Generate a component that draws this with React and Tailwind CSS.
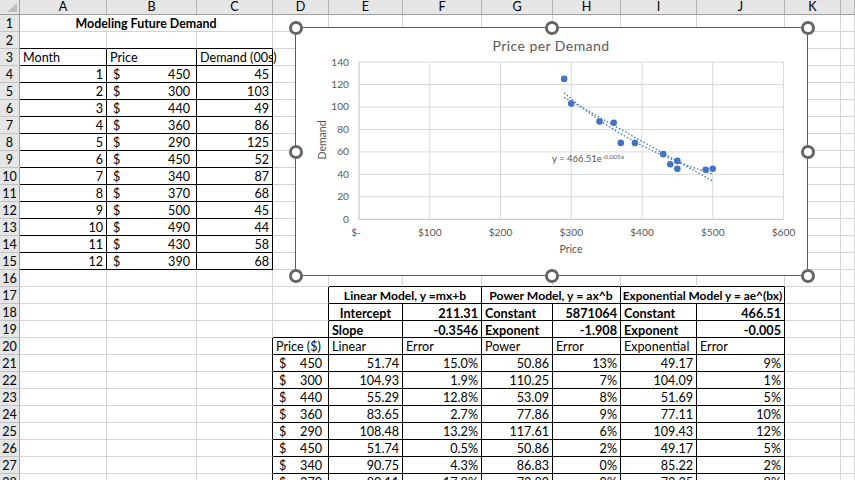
const COLS = ["A", "B", "C", "D", "E", "F", "G", "H", "I", "J", "K", ""];
const DEMAND = [45, 103, 49, 86, 125, 52, 87, 68, 45, 44, 58, 68];
const PRICE = [450, 300, 440, 360, 290, 450, 340, 370, 500, 490, 430, 390];

const MODEL_ROWS = [
  [450, "51.74", "15.0%", "50.86", "13%", "49.17", "9%"],
  [300, "104.93", "1.9%", "110.25", "7%", "104.09", "1%"],
  [440, "55.29", "12.8%", "53.09", "8%", "51.69", "5%"],
  [360, "83.65", "2.7%", "77.86", "9%", "77.11", "10%"],
  [290, "108.48", "13.2%", "117.61", "6%", "109.43", "12%"],
  [450, "51.74", "0.5%", "50.86", "2%", "49.17", "5%"],
  [340, "90.75", "4.3%", "86.83", "0%", "85.22", "2%"],
  [370, "80.11", "17.8%", "73.89", "9%", "73.35", "8%"],
];

// which grid lines are black, r is the sheet row, c the column index
function blackRight(r, c) {
  if (r >= 3 && r <= 15 && c <= 2) return true;
  if (r >= 17 && r <= 19 && c >= 3 && c <= 9) return true;
  if (r >= 20 && c >= 2 && c <= 9) return true;
  return false;
}

function blackBottom(r, c) {
  if (r >= 2 && r <= 15 && c <= 2) return true;
  if (r >= 16 && c >= 4 && c <= 9) return true;
  if (r >= 19 && c === 3) return true;
  return false;
}

function buildCells() {
  const cells = {};
  const put = (r, c, node) => (cells[`${r}-${c}`] = node);

  put(3, 0, <Left>Month</Left>);
  put(3, 1, <Left>Price</Left>);
  put(3, 2, <Left>Demand (00s)</Left>);
  PRICE.forEach((p, i) => {
    put(4 + i, 0, <Right>{i + 1}</Right>);
    put(4 + i, 1, <Money value={p} />);
    put(4 + i, 2, <Right>{DEMAND[i]}</Right>);
  });

  put(18, 4, <div className="text-center font-bold text-[12.7px]">Intercept</div>);
  put(18, 5, <Right bold>211.31</Right>);
  put(18, 6, <Left bold>Constant</Left>);
  put(18, 7, <Right bold>5871064</Right>);
  put(18, 8, <Left bold>Constant</Left>);
  put(18, 9, <Right bold>466.51</Right>);
  put(19, 4, <Left bold>Slope</Left>);
  put(19, 5, <Right bold>-0.3546</Right>);
  put(19, 6, <Left bold>Exponent</Left>);
  put(19, 7, <Right bold>-1.908</Right>);
  put(19, 8, <Left bold>Exponent</Left>);
  put(19, 9, <Right bold>-0.005</Right>);

  ["Price ($)", "Linear", "Error", "Power", "Error", "Exponential", "Error"].forEach((t, i) => {
    put(20, 3 + i, <Left>{t}</Left>);
  });
  MODEL_ROWS.forEach((row, i) => {
    put(21 + i, 3, <Money value={row[0]} />);
    row.slice(1).forEach((t, j) => put(21 + i, 4 + j, <Right>{t}</Right>));
  });
  return cells;
}

function Left({ children, bold }) {
  return <div className={`pl-[3px] whitespace-nowrap ${bold ? "font-bold text-[12.7px]" : ""}`}>{children}</div>;
}

function Right({ children, bold }) {
  return <div className={`pr-[3px] text-right whitespace-nowrap ${bold ? "font-bold text-[12.7px]" : ""}`}>{children}</div>;
}

function Money({ value }) {
  return (
    <div className="flex justify-between px-[6px]">
      <span>$</span>
      <span>{value}</span>
    </div>
  );
}

function Cell({ r, c, span, children }) {
  const right = blackRight(r, c + (span || 1) - 1);
  const bottom = blackBottom(r, c);
  return (
    <div
      className={`h-[17px] border-r border-b leading-[18px] ${right ? "border-r-black" : "border-r-[#d4d4d4]"} ${
        bottom ? "border-b-black" : "border-b-[#d4d4d4]"
      } ${span === 3 ? "col-span-3" : span === 2 ? "col-span-2" : ""}`}
    >
      {children}
    </div>
  );
}

function Sheet() {
  const cells = buildCells();
  const rows = [];
  for (let r = 1; r <= 28; r++) {
    rows.push(
      <div key={`h${r}`} className="h-[17px] border-r border-b border-r-[#9f9f9f] border-b-[#c4c4c4] bg-[#e6e6e6] text-center leading-[18px]">
        {r}
      </div>
    );
    if (r === 1) {
      rows.push(
        <Cell key="title" r={1} c={0} span={3}>
          <div className="text-center font-bold text-[12.4px]">Modeling Future Demand</div>
        </Cell>
      );
    }
    if (r === 17) {
      rows.push(<Cell key="17-0" r={17} c={0} />, <Cell key="17-1" r={17} c={1} />, <Cell key="17-2" r={17} c={2} />, <Cell key="17-3" r={17} c={3} />);
      rows.push(
        <Cell key="17-e" r={17} c={4} span={2}>
          <div className="text-center font-bold text-[12.1px]">Linear Model, y =mx+b</div>
        </Cell>,
        <Cell key="17-g" r={17} c={6} span={2}>
          <div className="text-center font-bold text-[12.2px]">Power Model, y = ax^b</div>
        </Cell>,
        <Cell key="17-i" r={17} c={8} span={2}>
          <div className="text-center font-bold text-[11.9px] whitespace-nowrap">Exponential Model y = ae^(bx)</div>
        </Cell>
      );
    }
    const from = r === 1 ? 3 : r === 17 ? 10 : 0;
    for (let c = from; c < 12; c++) {
      rows.push(
        <Cell key={`${r}-${c}`} r={r} c={c}>
          {cells[`${r}-${c}`]}
        </Cell>
      );
    }
  }

  return (
    <div className="grid grid-cols-[20px_87px_90px_76px_56px_74px_79px_71px_68px_76px_88px_56px_14px]">
      <div className="h-[15px] border-r border-b border-r-[#9f9f9f] border-b-[#9f9f9f] bg-[#e6e6e6] flex items-end justify-end pr-[2px] pb-[2px]">
        <svg width="10" height="9" viewBox="0 0 10 9">
          <polygon points="10,0 10,9 0,9" fill="#bdbdbd" />
        </svg>
      </div>
      {COLS.map((name, i) => (
        <div key={i} className="h-[15px] border-r border-b border-r-[#b4b4b4] border-b-[#9f9f9f] bg-[#e6e6e6] text-center leading-[14px]">
          {name}
        </div>
      ))}
      {rows}
    </div>
  );
}

const px = (p) => 359 + p * 0.7075;
const py = (d) => 219.3 - d * 1.1233;

function trend(fn) {
  const pts = [];
  for (let p = 290; p <= 500; p += 10) pts.push(`${px(p).toFixed(1)},${py(fn(p)).toFixed(1)}`);
  return pts.join(" ");
}

function PriceChart() {
  const yTicks = [0, 20, 40, 60, 80, 100, 120, 140];
  const xTicks = [0, 100, 200, 300, 400, 500, 600];
  return (
    <svg viewBox="296 28 511 247" className="block w-full h-full" fontFamily="Lato, sans-serif" fill="#595959">
      {yTicks.map((d) => (
        <line key={d} x1="359" x2="783.5" y1={py(d)} y2={py(d)} stroke={d === 0 ? "#bfbfbf" : "#d9d9d9"} strokeWidth="1" />
      ))}
      {xTicks.map((p) => (
        <line key={p} x1={px(p)} x2={px(p)} y1="62" y2="219.3" stroke={p === 0 ? "#bfbfbf" : "#d9d9d9"} strokeWidth="1" />
      ))}
      {yTicks.map((d) => (
        <text key={d} x="349" y={py(d) + 3.5} textAnchor="end" fontSize="10.2">
          {d}
        </text>
      ))}
      {xTicks.map((p) => (
        <text key={p} x={p === 0 ? 356 : px(p)} y="236" textAnchor="middle" fontSize="10.2">
          {p === 0 ? "$-" : `$${p}`}
        </text>
      ))}
      <text x="551" y="51" textAnchor="middle" fontSize="14" letterSpacing="0.45">
        Price per Demand
      </text>
      <text x="571" y="253" textAnchor="middle" fontSize="10.5">
        Price
      </text>
      <text transform="translate(326 140) rotate(-90)" textAnchor="middle" fontSize="10.5">
        Demand
      </text>
      <polyline points={trend((p) => 211.31 - 0.3546 * p)} fill="none" stroke="#4472c4" strokeWidth="1.3" strokeDasharray="1.5 2" />
      <polyline points={trend((p) => 466.51 * Math.exp(-0.0049 * p))} fill="none" stroke="#4472c4" strokeWidth="1.3" strokeDasharray="1.5 2" />
      {PRICE.map((p, i) => (
        <circle key={i} cx={px(p)} cy={py(DEMAND[i])} r="3.3" fill="#4472c4" />
      ))}
      <text x="552" y="162" fontSize="9.5">
        y = 466.51e
        <tspan fontSize="6.5" dy="-3">
          -0.005x
        </tspan>
      </text>
    </svg>
  );
}

const HANDLES = [
  "-left-[7px] -top-[7px]",
  "left-[249px] -top-[7px]",
  "left-[505px] -top-[7px]",
  "-left-[7px] top-[117px]",
  "left-[505px] top-[117px]",
  "-left-[7px] top-[241px]",
  "left-[249px] top-[241px]",
  "left-[505px] top-[241px]",
];

export default function App() {
  return (
    <div className="relative h-[480px] w-[855px] overflow-hidden bg-white text-[12.6px] text-black font-['Lato',sans-serif]">
      <Sheet />

      {/* chart object sits over the cells */}
      <div className="absolute left-[295px] top-[27px] h-[249px] w-[513px] border border-[#5f5f5f] bg-white">
        <PriceChart />
        {HANDLES.map((pos) => (
          <div key={pos} className={`absolute h-[14px] w-[14px] rounded-full border-[3px] border-[#666666] bg-white ${pos}`} />
        ))}
      </div>
    </div>
  );
}
